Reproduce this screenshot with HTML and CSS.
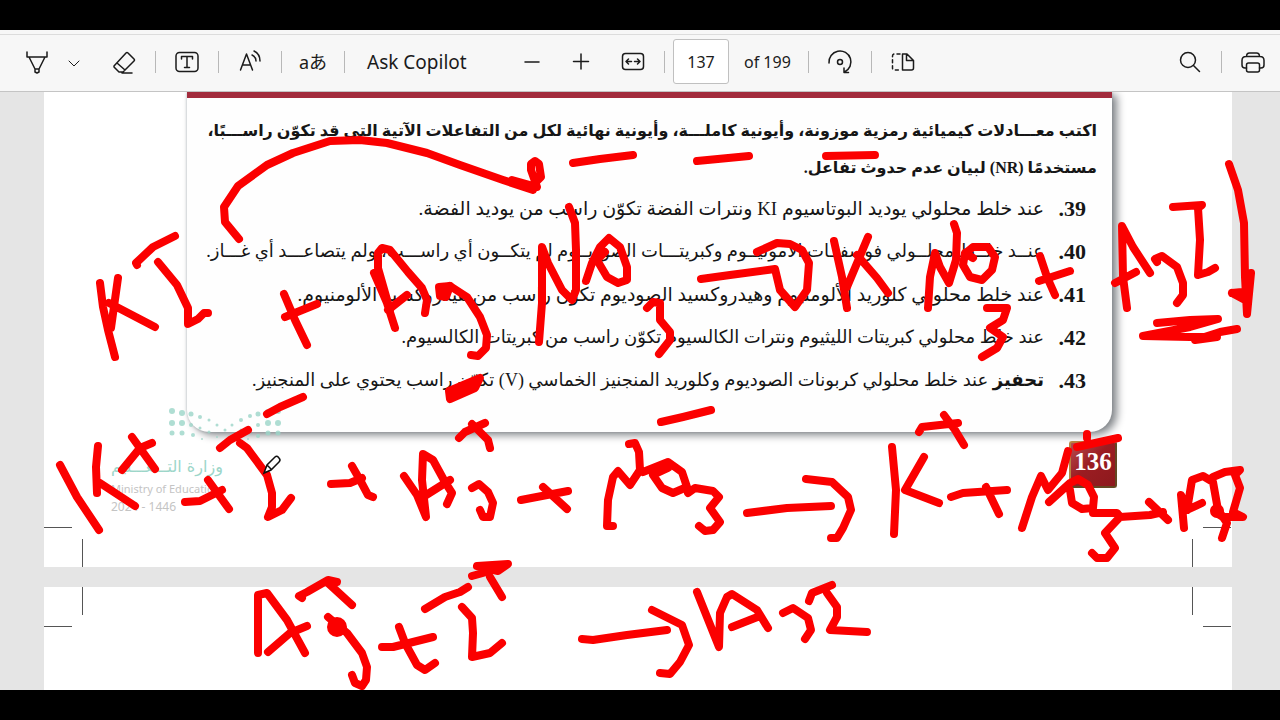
FILE: index.html
```
<!DOCTYPE html>
<html lang="en">
<head>
<meta charset="utf-8">
<title>PDF viewer</title>
<link rel="stylesheet" href="styles.css">
</head>
<body>
<div class="app">
<header class="toolbar">
  <button class="tool" aria-label="Draw"><svg viewBox="0 0 32 32"><path d="M6 6v5h20V6M8 11l6 12h4l6-12M14 23v3l2 1 2-1v-3"/></svg></button>
  <button class="tool tool-small" aria-label="Draw options"><svg viewBox="0 0 32 32"><path d="M11 15l5 5 5-5"/></svg></button>
  <button class="tool tool-erase" aria-label="Erase"><svg viewBox="0 0 32 32"><path d="M6 20L18 7q1-1 2 0l6 6q1 1 0 2L15 26h-4l-5-5zM9 17l8 7M14 27h10"/></svg></button>
  <span class="sep"></span>
  <button class="tool" aria-label="Add text"><svg viewBox="0 0 32 32"><rect x="5" y="6.500" width="22" height="19" rx="3.500"/><path d="M10.500 13v-2.500h11V13M16 10.500v11M13.500 21.500h5"/></svg></button>
  <span class="sep"></span>
  <button class="tool" aria-label="Read aloud"><svg viewBox="0 0 32 32"><path d="M6.500 24l6-16 6 16M8.500 19h8M18 9q4 2 4 6M20 5q6 3 6 10"/></svg></button>
  <span class="sep"></span>
  <button class="tool translate" aria-label="Translate">aあ</button>
  <span class="sep"></span>
  <button class="ask">Ask Copilot</button>
  <button class="tool" aria-label="Zoom out"><svg viewBox="0 0 32 32"><path d="M9 16h14"/></svg></button>
  <button class="tool tool-plus" aria-label="Zoom in"><svg viewBox="0 0 32 32"><path d="M8.500 15.500h15M16 8v15"/></svg></button>
  <button class="tool tool-fit" aria-label="Fit to width"><svg viewBox="0 0 32 32"><rect x="5.500" y="7.500" width="21" height="16" rx="3"/><path d="M9 15.500h5.500M11.500 13L9 15.500l2.500 2.500M23 15.500h-5.500M20.500 13l2.500 2.500-2.500 2.500"/></svg></button>
  <span class="sep"></span>
  <input class="page-input" aria-label="Page number" value="137">
  <span class="total">of 199</span>
  <span class="sep"></span>
  <button class="tool" aria-label="Rotate"><svg viewBox="0 0 32 32"><path d="M5 17a11 11 0 1 1 15.500 9M24.500 26.500H20V22"/><circle cx="16" cy="16" r="2.500"/></svg></button>
  <span class="sep"></span>
  <button class="tool" aria-label="Page view"><svg viewBox="0 0 32 32"><path d="M15.500 8v16h9q2 0 2-2v-7.500L20 8zM19.500 8v6.500h7"/><path stroke-dasharray="3 3" d="M13 8H7.500Q5.500 8 5.500 10v12q0 2 2 2H13"/></svg></button>
  <span class="spacer"></span>
  <button class="tool" aria-label="Find"><svg viewBox="0 0 32 32"><circle cx="14" cy="14" r="7.500"/><path d="M19.500 19.500l6 6"/></svg></button>
  <span class="sep"></span>
  <button class="tool" aria-label="Print"><svg viewBox="0 0 32 32"><path d="M9.500 22H8q-3 0-3-3v-4.500q0-4 4-4h14q4 0 4 4V19q0 3-3 3h-1.500M9.500 10.500q0-3.500 3-3.500h7q3 0 3 3.500"/><rect x="9.500" y="17" width="13" height="9" rx="2"/></svg></button>
</header>
<main class="viewer">
  <section class="page page-first">
    <article class="card" dir="rtl" lang="ar">
      <h1 class="lead">اكتب معـــادلات كيميائية رمزية موزونة، وأيونية كاملـــة، وأيونية نهائية لكل من التفاعلات الآتية التي قد تكوّن راســـبًا،<br>مستخدمًا (NR) لبيان عدم حدوث تفاعل.</h1>
      <ol class="questions">
        <li class="loose"><b class="num">39.</b><span>عند خلط محلولي يوديد البوتاسيوم KI ونترات الفضة تكوّن راسب من يوديد الفضة.</span></li>
        <li><b class="num">40.</b><span>عنــد خلــط محلــولي فوسفــات الأمونيــوم وكبريتـــات الصوديــوم لم يتكــون أي راســـب، ولم يتصاعـــد أي غـــاز.</span></li>
        <li class="loose"><b class="num">41.</b><span>عند خلط محلولي كلوريد الألومنيوم وهيدروكسيد الصوديوم تكوّن راسب من هيدروكسيد الألومنيوم.</span></li>
        <li><b class="num">42.</b><span>عند خلط محلولي كبريتات الليثيوم ونترات الكالسيوم تكوّن راسب من كبريتات الكالسيوم.</span></li>
        <li><b class="num">43.</b><span><b>تحفيز</b> عند خلط محلولي كربونات الصوديوم وكلوريد المنجنيز الخماسي (V) تكوّن راسب يحتوي على المنجنيز.</span></li>
      </ol>
    </article>
    <footer class="page-foot">
      <div class="ministry">
        <span class="ministry-ar" dir="rtl" lang="ar">وزارة التـــعـــليم</span>
        <span>Ministry of Education</span>
        <span class="year">2024 - 1446</span>
      </div>
      <span class="folio">136</span>
    </footer>
    <svg class="dots" viewBox="0 0 112 32" aria-hidden="true"><g><circle cx="3" cy="3" r="3"/><circle cx="13" cy="5" r="3"/><circle cx="22" cy="6" r="2.500"/><circle cx="31" cy="9" r="2"/><circle cx="40" cy="12" r="1.500"/><circle cx="48" cy="17" r="1.500"/><circle cx="56" cy="22" r="1.500"/><circle cx="63" cy="17" r="1.500"/><circle cx="72" cy="12" r="2"/><circle cx="81" cy="8" r="2"/><circle cx="89" cy="6" r="2.500"/><circle cx="99" cy="4" r="3"/><circle cx="109" cy="3" r="3"/><circle cx="3" cy="15" r="3"/><circle cx="13" cy="15" r="3"/><circle cx="22" cy="17" r="2"/><circle cx="31" cy="20" r="1.500"/><circle cx="40" cy="24" r="1.500"/><circle cx="72" cy="22" r="1.500"/><circle cx="89" cy="17" r="2"/><circle cx="99" cy="15" r="3"/><circle cx="109" cy="15" r="3"/><circle cx="3" cy="25" r="2.500"/><circle cx="13" cy="25" r="2.500"/><circle cx="24" cy="27" r="2"/><circle cx="33" cy="31" r="1"/><circle cx="48" cy="29" r="1"/><circle cx="79" cy="31" r="1"/><circle cx="89" cy="28" r="2"/><circle cx="99" cy="25" r="2.500"/><circle cx="109" cy="25" r="2.500"/></g></svg>
    <i class="crop crop-h left low"></i><i class="crop crop-v left low"></i><i class="crop crop-h right low"></i><i class="crop crop-v right low"></i>
  </section>
  <section class="page page-next">
    <i class="crop crop-h left high"></i><i class="crop crop-v left high"></i><i class="crop crop-h right high"></i><i class="crop crop-v right high"></i>
  </section>
  <svg class="ink" viewBox="0 92 1280 598" aria-label="Handwritten notes">
    <g>
    <path d="M239 239L225 222 224 207 238 186 267 165 293 153 330 141 360 140 387 143 427 153 460 165 503 180 533 190 512 180 537 187 531 170V164L535 161 539 164 541 177 532 186"/>
    <path d="M100 283L103 307 108 330 115 357M118 278L111 328M109 303L155 327M137 265L136 263 153 247 175 236M158 262L177 285 188 308V324L198 319 204 313H208"/>
    <path d="M284 294L295 320 307 345M285 317L317 304M395 328L387 303 374 273M390 310L378 268V253L382 248 390 250 408 272 422 288 427 300 425 313M388 310L407 295"/>
    <path class="fill" d="M439 287L450 286 446 297 440 296Z"/>
    <path d="M450 286L467 297 480 317 487 335 486 348 478 356 471 355"/>
    <path d="M539 342L542 303V247L548 263 562 290 572 300 576 290V250L575 223 569 207M586 281L592 263 600 247 609 238 620 247 627 267V280L618 283 607 277 597 260 605 252"/>
    <path d="M647 308L653 302 660 303V320L670 332V340L659 354M573 163L600 159 633 155M697 161L749 156M826 156L875 155"/>
    <path d="M701 279L730 275 775 269 780 290 795 307 807 290 809 263 802 250 790 244 777 243 757 252"/>
    <path d="M834 241L842 277 847 308M868 237L847 287M857 255L877 278 888 293M928 308L930 277 935 253 940 267 949 283 956 260 957 233 954 224"/>
    <path d="M973 258L965 253 963 265 970 277 982 280 992 270 995 257 988 247 973 247 967 252M987 308H1007L1003 320 990 328 1003 337 997 348 982 357"/>
    <path d="M1040 256L1047 277 1055 295M1039 281L1070 271M1127 308L1123 277 1122 226 1133 247 1150 273M1115 283L1136 272"/>
    <path d="M1157 262L1155 259 1162 256 1177 267 1183 283V295L1177 303M1173 207L1202 205 1198 208 1200 240 1198 275 1208 272 1215 268"/>
    <path d="M1157 323L1190 320 1218 319 1190 327 1143 336 1190 337H1217L1195 340 1220 332 1237 329"/>
    <path d="M1229 164L1238 190 1244 223 1245 277 1247 314 1251 273M1232 293L1242 292 1245 300 1232 293"/>
    <path d="M267 414L280 407 303 397M220 448L230 440 248 430M240 443L247 448 267 475 272 493V507L268 517 282 510 291 498"/>
    <path d="M60 465L77 497 99 530M98 446L96 467 97 493M100 483L135 506M132 437L155 469M152 443L140 448 122 470"/>
    <path d="M185 502L200 501 222 490M208 480L229 509M331 484L350 483 362 478M352 466L360 480 368 495 373 497"/>
    <path d="M404 476L417 495 426 517 422 480 423 454 433 460 445 482 452 493 447 504M423 497L450 480"/>
    <path class="fill" d="M449 391L480 378 475 388 450 399Z"/>
    <path d="M459 438L465 432 485 423M472 424L480 432 488 440 490 448M472 488L479 484 488 492 493 503 490 517H483L480 510M521 500L568 491M543 487L567 509"/>
    <path d="M613 526H607L608 500 613 477 618 471 630 485 640 470 639 452 635 443 629 444M643 472L668 462 682 472 687 487 673 493 662 488 653 475 668 468"/>
    <path d="M688 493L695 488 713 491 719 497 710 508 720 522 713 530 705 531 699 526M661 422L683 417 711 410M747 513L787 508 831 506M806 479L832 482 848 497 851 510 843 528 837 538H831"/>
    <path d="M919 432L922 427 958 423M944 415L955 430 964 445M892 447L896 490 894 534M924 457L905 490 939 503M951 497L963 493 1007 490M986 487L999 514"/>
    <path d="M1022 528L1032 497 1041 476 1048 490 1062 473 1068 451M1049 502L1070 483 1078 479 1088 485 1094 497 1093 508 1082 509 1072 503 1070 490"/>
    <path d="M1093 513H1117L1120 517 1150 515 1163 512M1149 502L1168 520M1120 517L1105 533 1115 548 1107 558H1097L1092 553M1077 447L1118 438M1087 434V438"/>
    <path d="M1184 528L1181 495 1187 510 1202 503M1187 510L1192 480 1203 476 1213 482 1218 510 1227 523 1222 538M1213 477L1225 472 1240 470 1235 475 1240 488 1233 512 1243 517H1223L1215 512"/>
    <circle class="fill" cx="1217" cy="511" r="3"/>
    <path d="M258 653V595L267 593 287 620 305 653M268 652L290 633 307 626M302 598L299 596 307 592 328 580 337 582M328 583L352 605"/>
    <path d="M328 617L347 633 362 653 367 667 366 680 362 686 355 683 352 675"/><circle class="fill" cx="337" cy="627" r="6"/>
    <path d="M382 647H393L433 637M399 627L405 643 417 665 425 670 435 663M425 609L445 597 460 592 468 587"/>
    <path d="M462 607L472 618 473 633 472 657 490 653 502 643M472 576L490 571M490 577L502 597"/><path class="fill" d="M477 566L508 564 498 571Z"/>
    <path d="M582 639L593 640 627 635 667 630M652 610L682 625 689 645 680 662 670 674 660 673M697 592L719 647 720 613 727 597 732 594 757 610 768 628M732 627L760 616"/>
    <path d="M783 613L793 608 808 618 811 630 805 639M809 601L812 593 832 585M827 593L837 607V617L830 630 867 632"/>
    </g>
    <path class="cursor" d="M264 473L267 465 275 457Q277 455 279 458 281 460 279 462L271 470ZM267 465L271 469"/>
  </svg>
</main>
</div>
</body>
</html>
```

FILE: styles.css
```
* { box-sizing: border-box; }
body { margin: 0; background: #000; color: #1b1b1b; font-family: "Noto Sans", sans-serif; }
.app { height: 100vh; padding: 30px 0; display: flex; flex-direction: column; overflow: hidden; }
.toolbar { flex: none; display: flex; align-items: center; gap: 15px; height: 62px; padding: 2px 11px 0 21px; background: #f7f7f7; border-bottom: 1px solid #c4c4c4; box-shadow: inset 0 4px #f7f7f7, inset 0 5px #dcdcdc; }
.tool { flex: none; width: 32px; height: 32px; padding: 0; border: 0; background: none; color: #1b1b1b; }
.tool svg { display: block; width: 100%; height: 100%; fill: none; stroke: currentColor; stroke-width: 1.5; stroke-linejoin: round; stroke-linecap: round; }
.tool-small { margin-left: -10px; }
.tool-small svg { stroke-width: 1; }
.tool-erase { margin-left: 3px; }
.tool-plus { margin-left: 2px; }
.tool-fit { margin-left: 5px; }
.translate { font: 18px/32px "Noto Sans", "Noto Sans CJK JP", sans-serif; white-space: nowrap; display: flex; justify-content: center; }
.sep { flex: none; width: 1px; height: 22px; background: #b8b8b8; }
.ask { flex: none; width: 142px; margin-right: -1px; padding: 0 7px; border: 0; background: none; color: #1b1b1b; font: 19px/32px "Noto Sans", sans-serif; text-align: left; white-space: nowrap; }
.page-input { flex: none; width: 56px; height: 45px; margin-left: -7px; padding: 0; border: 1px solid #c0c0c0; border-radius: 3px; background: #fff; color: #1b1b1b; font: 16px "Noto Sans", sans-serif; text-align: center; }
.total { flex: none; width: 49px; font-size: 16px; white-space: nowrap; }
.spacer { flex: 1; }
.viewer { position: relative; flex: 1; min-height: 0; overflow: hidden; background: #e5e5e5; }
.page { position: relative; margin: 0 48px 20px 44px; background: #fff; }
.page-first { min-height: 475px; }
.page-next { height: 180px; margin-bottom: 0; }
.card { margin: 0 120px 0 143px; min-height: 340px; padding: 14px 15px 0; background: #fefefe; border-top: 6px solid #a22b3c; border-radius: 0 0 22px 22px; box-shadow: 5px 3px 8px #808488, 0 0 3px #b4bcc0; white-space: nowrap; color: #161616; font-family: "Liberation Serif", "DejaVu Sans", serif; }
.lead { margin: 0; font-size: 16px; line-height: 37px; font-weight: bold; }
.questions { list-style: none; margin: 1px 11px 0 0; padding: 0; font-size: 18px; line-height: 43px; }
.questions li { display: flex; height: 43px; }
.questions .loose { font-size: 19px; }
.num { flex: none; width: 42px; font-size: 22px; }
.page-foot { display: flex; justify-content: space-between; align-items: flex-start; padding: 9px 115px 0 67px; }
.ministry { display: flex; flex-direction: column; padding-top: 14px; color: #c4c4c4; font-size: 11px; line-height: 20px; }
.ministry-ar { color: #9cd6c9; font: 16px/24px "DejaVu Sans", sans-serif; }
.year { font-size: 12px; line-height: 16px; }
.folio { width: 48px; height: 47px; border: 2px outset #b88440; border-radius: 3px; background: linear-gradient(135deg, #b64c50, #9b1d22 45%, #8d191d); color: #fff; font: bold 25px/38px "Liberation Serif", serif; text-align: center; }
.dots { position: absolute; left: 125px; top: 316px; width: 112px; fill: #9cd6c9; opacity: .8; }
.crop { position: absolute; background: #555; }
.crop-h { width: 28px; height: 1px; }
.crop-v { width: 1px; height: 28px; }
.crop-h.left { left: 0; } .crop-h.right { right: 1px; }
.crop-v.left { left: 38px; } .crop-v.right { right: 39px; }
.crop-h.low { bottom: 39px; } .crop-v.low { bottom: 0; }
.crop-h.high { top: 39px; } .crop-v.high { top: 0; }
.ink { position: absolute; left: 0; top: 0; width: 100%; pointer-events: none; }
.ink g { fill: none; stroke: #fb0000; stroke-width: 8; stroke-linecap: round; stroke-linejoin: round; }
.ink .fill { fill: #fb0000; }
.cursor { fill: #fff; stroke: #111; stroke-width: 1.5; }
```
